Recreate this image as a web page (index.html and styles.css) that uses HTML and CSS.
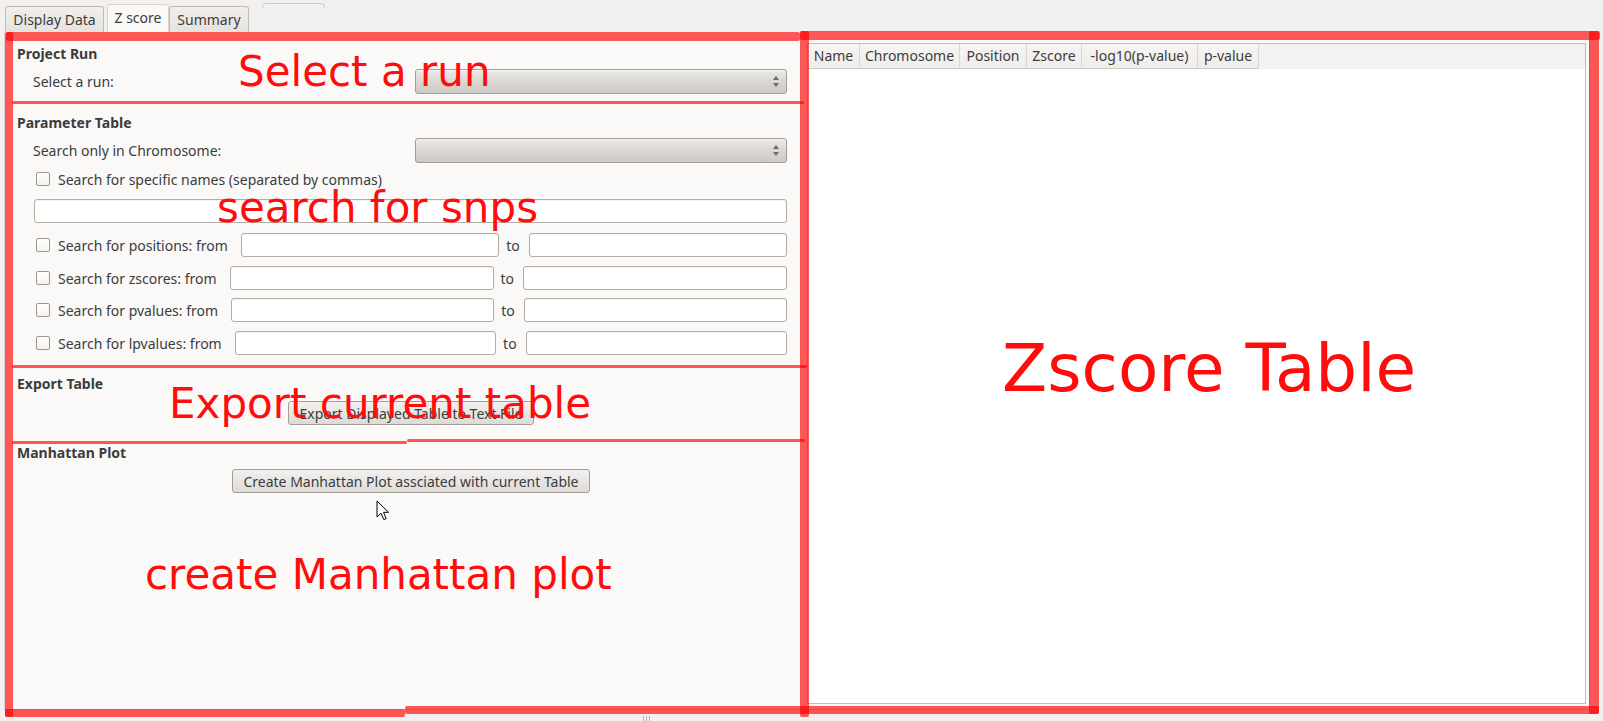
FILE: index.html
```html
<!DOCTYPE html>
<html>
<head>
<meta charset="utf-8">
<link rel="stylesheet" href="styles.css">
</head>
<body>
<div class="window">
  <div class="tabbar">
    <div class="tab t1">Display Data</div>
    <div class="tab active">Z score</div>
    <div class="tab t3">Summary</div>
    <div class="ghost-tab"></div>
  </div>
  <div class="pane">
    <div class="left">
      <section class="group g1">
        <div class="gtitle">Project Run</div>
        <div class="row combo-row">
          <span class="lbl">Select a run:</span>
          <div class="combo"><span class="arrows"><i class="up"></i><i class="down"></i></span></div>
        </div>
      </section>
      <section class="group g2">
        <div class="gtitle">Parameter Table</div>
        <div class="row combo-row">
          <span class="lbl">Search only in Chromosome:</span>
          <div class="combo"><span class="arrows"><i class="up"></i><i class="down"></i></span></div>
        </div>
        <div class="row chk-row">
          <span class="chk"></span><span class="clbl">Search for specific names (separated by commas)</span>
        </div>
        <div class="row full"><div class="input"></div></div>
        <div class="row range r1">
          <span class="chk"></span><span class="clbl">Search for positions: from</span>
          <div class="input"></div><span class="to">to</span><div class="input"></div>
        </div>
        <div class="row range r2">
          <span class="chk"></span><span class="clbl">Search for zscores: from</span>
          <div class="input"></div><span class="to">to</span><div class="input"></div>
        </div>
        <div class="row range r3">
          <span class="chk"></span><span class="clbl">Search for pvalues: from</span>
          <div class="input"></div><span class="to">to</span><div class="input"></div>
        </div>
        <div class="row range r4">
          <span class="chk"></span><span class="clbl">Search for lpvalues: from</span>
          <div class="input"></div><span class="to">to</span><div class="input"></div>
        </div>
      </section>
      <section class="group g3">
        <div class="gtitle">Export Table</div>
        <div class="btnrow"><button class="btn b-export">Export Displayed Table to Text File</button></div>
      </section>
      <section class="group g4">
        <div class="gtitle">Manhattan Plot</div>
        <div class="btnrow b2"><button class="btn b-plot">Create Manhattan Plot assciated with current Table</button></div>
      </section>
    </div>
    <div class="right">
      <div class="table">
        <div class="thead">
          <div class="th c-name">Name</div>
          <div class="th c-chr">Chromosome</div>
          <div class="th c-pos">Position</div>
          <div class="th c-z">Zscore</div>
          <div class="th c-lp">-log10(p-value)</div>
          <div class="th c-p">p-value</div>
        </div>
        <div class="tbody"></div>
      </div>
    </div>
  </div>
  <div class="bottom-grip"><i></i><i></i><i></i></div>

  <div class="ann">
    <div class="seg s-top-l"></div>
    <div class="seg s-top-r"></div>
    <div class="seg s-left"></div>
    <div class="seg s-mid"></div>
    <div class="seg s-right"></div>
    <div class="seg s-bot-l"></div>
    <div class="seg s-bot-r"></div>
    <div class="seg h1"></div>
    <div class="seg h2"></div>
    <div class="seg h3a"></div>
    <div class="seg h3b"></div>
    <div class="atext t-run">Select a run</div>
    <div class="atext t-snps">search for snps</div>
    <div class="atext t-export">Export current table</div>
    <div class="atext t-plot">create Manhattan plot</div>
    <div class="atext t-table">Zscore Table</div>
    <svg class="cursor" width="14" height="22" viewBox="0 0 14 22">
      <path d="M1 1 L1 17 L5 13.2 L7.8 19.6 L10.2 18.6 L7.5 12.3 L12.6 12.3 Z" fill="#ffffff" stroke="#000000" stroke-width="1" stroke-linejoin="round"/>
    </svg>
  </div>
</div>
</body>
</html>
```
FILE: styles.css
```css
* { box-sizing: border-box; }
html, body { margin: 0; padding: 0; }
body {
  width: 1603px;
  height: 721px;
  overflow: hidden;
  background: #f2f1f0;
  font-family: "Noto Sans", "DejaVu Sans", sans-serif;
  font-size: 14px;
  color: #3c3c3c;
}
.window { position: relative; width: 1603px; height: 721px; }

/* tabs */
.tabbar {
  height: 32px;
  display: flex;
  align-items: flex-end;
  padding-left: 5px;
}
.tab {
  height: 26px;
  line-height: 25px;
  text-align: center;
  background: linear-gradient(#f1efed, #e5e2df);
  border: 1px solid #c2bcb5;
  border-bottom: none;
  border-radius: 3px 3px 0 0;
  color: #3c3c3c;
}
.t1 { width: 99px; }
.tab.active {
  width: 62px;
  height: 28px;
  line-height: 26px;
  margin-left: 3px;
  background: #faf9f8;
  border-color: #d8d3cd;
}
.t3 { width: 80px; }
.ghost-tab {
  align-self: flex-start;
  margin-top: 3px;
  margin-left: 13px;
  width: 63px;
  height: 5px;
  border: 1px solid #d2cdc7;
  border-bottom: none;
  border-radius: 4px 4px 0 0;
}

/* main pane */
.pane {
  margin-left: 4px;
  width: 1586px;
  height: 678px;
  display: flex;
  background: #faf9f8;
  border: 1px solid #d6d1cb;
  border-top: none;
}
.left {
  width: 795px;
  display: flex;
  flex-direction: column;
}
.group { padding: 0 13px 0 12px; }
.gtitle {
  font-weight: bold;
  height: 18px;
  line-height: 18px;
}
.g1 { padding-top: 13px; height: 69px; }
.g2 { padding-top: 13px; height: 265px; }
.g3 { padding-top: 9px; height: 75px; }
.g4 { padding-top: 3px; flex: 1; }

.row {
  display: flex;
  align-items: center;
  height: 24px;
  padding-left: 16px;
}
.combo-row { margin-top: 6px; height: 25px; }
.lbl { flex: 0 0 382px; }
.combo {
  flex: 1;
  height: 25px;
  border: 1px solid #a19c95;
  border-radius: 3px;
  background: linear-gradient(#ebe9e6, #d9d6d2 55%, #cdc9c4);
  position: relative;
  box-shadow: inset 0 1px 0 rgba(255,255,255,0.6), 0 1px 0 rgba(255,255,255,0.7);
}
.arrows {
  position: absolute;
  right: 6px;
  top: 6px;
  width: 7px;
  height: 11px;
  display: flex;
  flex-direction: column;
  justify-content: space-between;
}
.arrows i { display: block; width: 0; height: 0; border-left: 3px solid transparent; border-right: 3px solid transparent; }
.arrows .up { border-bottom: 4px solid #6e6b67; }
.arrows .down { border-top: 4px solid #6e6b67; }

.chk-row { margin-top: 4px; }
.chk {
  flex: 0 0 14px;
  width: 14px;
  height: 14px;
  margin-left: 3px;
  margin-right: 8px;
  border: 1px solid #9d978f;
  border-radius: 2px;
  background: linear-gradient(#ffffff, #f3f2f0);
}
.clbl { white-space: nowrap; }
.full { margin-top: 8px; padding-left: 17px; }
.input {
  flex: 1;
  height: 24px;
  background: #ffffff;
  border: 1px solid #b5aca3;
  border-radius: 3px;
  box-shadow: inset 0 1px 1px rgba(0,0,0,0.06);
}
.r1 { margin-top: 10px; }
.r2 { margin-top: 9px; }
.r3 { margin-top: 8px; }
.r4 { margin-top: 9px; }
.range .clbl { margin-right: 13px; }
.to { margin: 0 9px 0 7px; }

.btnrow { display: flex; justify-content: center; margin-top: 8px; padding-left: 18px; }
.b2 { margin-top: 7px; }
.btn {
  height: 24px;
  font-family: "Noto Sans", "DejaVu Sans", sans-serif;
  font-size: 14px;
  color: #3c3c3c;
  padding: 0 6px;
  border: 1px solid #a29d97;
  border-radius: 3px;
  background: linear-gradient(#f2f1ef, #dedbd7);
  white-space: nowrap;
}
.b-export { width: 246px; }
.b-plot { width: 358px; }

/* right table */
.right {
  flex: 1;
  padding: 11px 3px 5px 7px;
}
.table {
  height: 100%;
  border: 1px solid #c4beb7;
  background: #ffffff;
  display: flex;
  flex-direction: column;
}
.thead {
  height: 25px;
  display: flex;
  background: #f3f2f1;
}
.th {
  height: 25px;
  line-height: 24px;
  text-align: center;
  border-right: 1px solid #dcd7d1;
  border-bottom: 1px solid #cfc9c2;
  background: linear-gradient(#f6f5f3, #efedea);
  white-space: nowrap;
}
.c-name { width: 52px; }
.c-chr { width: 100px; }
.c-pos { width: 67px; }
.c-z { width: 55px; }
.c-lp { width: 116px; }
.c-p { width: 61px; }
.tbody { flex: 1; }

.bottom-grip {
  display: flex;
  gap: 2px;
  margin-left: 643px;
  margin-top: 6px;
}
.bottom-grip i { display: block; width: 1px; height: 5px; background: #b8b2ab; }

/* annotations overlay */
.ann { position: absolute; left: 0; top: 0; width: 1603px; height: 721px; pointer-events: none; }
.seg { position: absolute; background: rgba(255, 0, 0, 0.65); border-radius: 2px; }
.s-top-l { left: 6px; top: 32px; width: 794px; height: 9px; }
.s-top-r { left: 800px; top: 31px; width: 800px; height: 9px; }
.s-left { left: 5px; top: 32px; width: 8px; height: 685px; }
.s-mid { left: 800px; top: 31px; width: 9px; height: 686px; }
.s-right { left: 1589px; top: 31px; width: 10px; height: 683px; }
.s-bot-l { left: 5px; top: 709px; width: 400px; height: 8px; }
.s-bot-r { left: 405px; top: 706px; width: 1194px; height: 8px; }
.h1 { left: 12px; top: 101px; width: 792px; height: 3px; }
.h2 { left: 12px; top: 365px; width: 795px; height: 3px; }
.h3a { left: 12px; top: 441px; width: 395px; height: 3px; }
.h3b { left: 407px; top: 439px; width: 398px; height: 3px; }

.atext {
  position: absolute;
  font-family: "DejaVu Sans", sans-serif;
  font-size: 42px;
  line-height: 42px;
  color: #ff0d0d;
  white-space: nowrap;
}
.t-run { left: 238px; top: 51px; }
.t-snps { left: 217px; top: 187px; }
.t-export { left: 169px; top: 383px; }
.t-plot { left: 145px; top: 554px; }
.t-table { left: 1002px; top: 336px; font-size: 66px; line-height: 66px; }
.cursor { position: absolute; left: 376px; top: 500px; }
```
